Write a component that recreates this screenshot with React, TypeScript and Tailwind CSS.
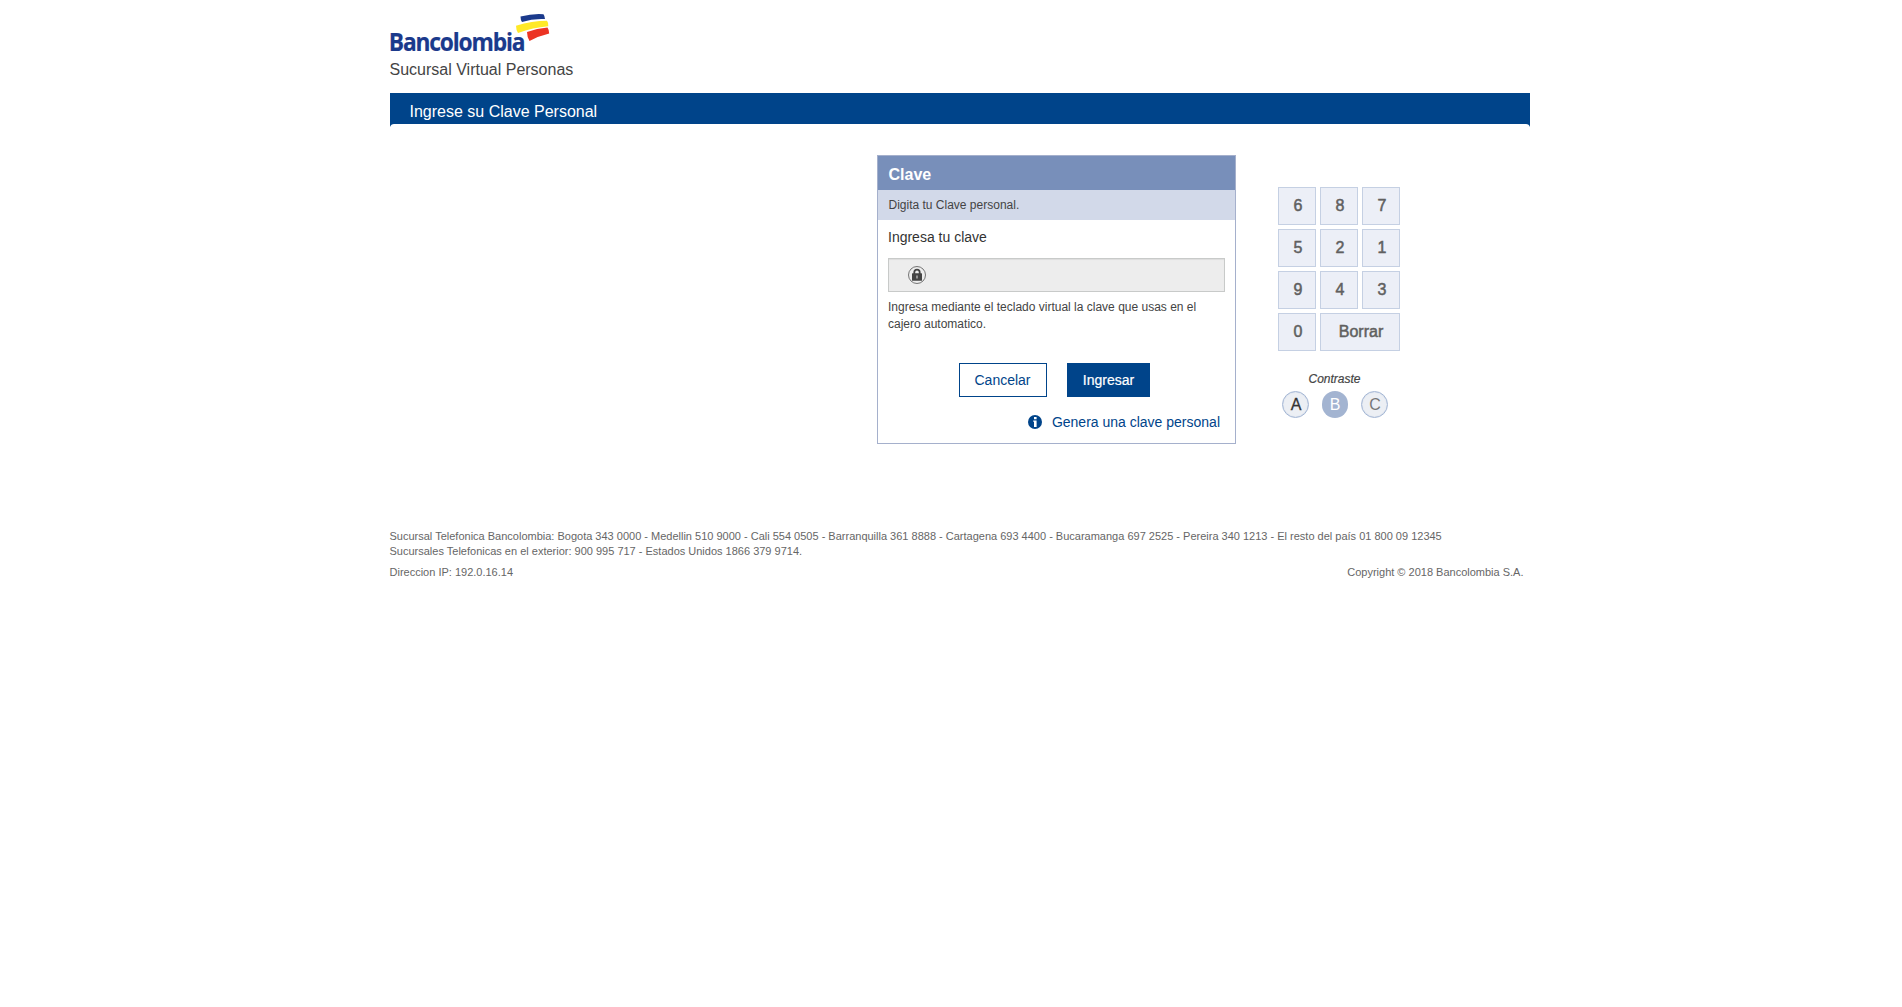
const keys = ['6', '8', '7', '5', '2', '1', '9', '4', '3', '0'];

function Logo() {
  return (
    <svg className="mt-3 block overflow-visible" width="160" height="42" viewBox="0 0 160 42" role="img" aria-label="Bancolombia">
      <text
        transform="translate(-1.2 39) scale(0.93 1)"
        fontFamily='"Open Sans", sans-serif'
        fontWeight="700"
        fontSize="24.500"
        fill="#1b3a8c"
        stroke="#1b3a8c"
        strokeWidth="0.2"
        textLength="147"
        lengthAdjust="spacing"
      >
        Bancolombia
      </text>
      <path d="M130.500 4.500 Q143 1.300 153.500 2.200 Q154.800 4 155 7 Q143 6.300 132 10 Q130.500 8 130.500 4.500Z" fill="#1b3a8c" />
      <path d="M126 13.800 Q142 8.700 157 8.700 Q158.700 11 158.300 14.200 Q143 15.500 128 21 Q126 18 126 13.800Z" fill="#ffe927" />
      <path d="M137 20 Q147 16.200 157.500 15.500 Q159.200 18 159.200 21.600 Q149 24 139.500 29 Q137 25 137 20Z" fill="#ec3424" />
    </svg>
  );
}

function LockIcon() {
  return (
    <svg width="18" height="18" viewBox="0 0 18 18">
      <circle cx="9" cy="9" r="8.500" fill="none" stroke="#666" strokeWidth="0.9" />
      <path d="M6.300 8V6.300a2.700 2.700 0 0 1 5.400 0V8" fill="none" stroke="#444" strokeWidth="1.800" />
      <rect x="4" y="7.200" width="10" height="7.600" rx="0.500" fill="#444" />
      <path d="M8.400 9.600h1.200v2.800H8.400z" fill="#ccc" />
    </svg>
  );
}

function InfoIcon() {
  return (
    <svg width="14" height="14" viewBox="0 0 14 14">
      <circle cx="7" cy="7" r="7" fill="#00448a" />
      <path d="M6 2h2.600v2.200H6zM5.200 5.400H8.600V12H6V6.700h-.8z" fill="#fff" />
    </svg>
  );
}

export default function App() {
  return (
    <div className="ml-[389.5px] w-[1140px] font-['Liberation_Sans',Arial,sans-serif]">
      <header className="flow-root">
        <Logo />
        <h1 className="mt-1 h-6 text-base leading-6 text-[#444]">Sucursal Virtual Personas</h1>
      </header>

      <div className="mt-[11px] h-[31px] bg-[#00448a] pl-5 text-base leading-[37px] text-white">Ingrese su Clave Personal</div>
      <div className="flex h-[3px] justify-between">
        <svg width="4" height="3" viewBox="0 0 4 3"><path d="M0 0H4Q1 0 0 3Z" fill="#00448a" /></svg>
        <svg width="4" height="3" viewBox="0 0 4 3"><path d="M4 0H0Q3 0 4 3Z" fill="#00448a" /></svg>
      </div>

      <main className="ml-[487.5px] mt-7 flex items-start">
        <section className="h-[289px] w-[359px] border border-[#a5b0cc]">
          <h2 className="h-[34px] bg-[#788fba] pl-[10.5px] text-base font-bold leading-[38px] text-white">Clave</h2>
          <p className="h-[30px] bg-[#d2d9e9] pl-[10.5px] text-xs leading-[30px] text-[#444]">Digita tu Clave personal.</p>
          <div className="px-2.5">
            <label className="block h-[38px] text-sm leading-[34px] text-[#333]">Ingresa tu clave</label>
            <div className="flex h-[34px] w-[337px] items-center border border-[#c8cac9] bg-[#ededed] pl-[19px] shadow-[inset_0_1px_1px_rgba(0,0,0,0.07)]">
              <LockIcon />
            </div>
            <p className="mt-[7px] w-[320px] text-xs leading-[17px] text-[#444]">
              Ingresa mediante el teclado virtual la clave que usas en el cajero automatico.
            </p>
          </div>
          <div className="ml-[81px] mt-[30px] flex gap-5 text-sm">
            <button className="h-[34px] w-[88px] border border-[#00448a] bg-white pr-px text-[#00448a]">Cancelar</button>
            <button className="h-[34px] w-[83px] bg-[#00448a] text-white [-webkit-text-stroke:0.2px_white]">Ingresar</button>
          </div>
          <a className="mr-[15px] mt-[15px] flex items-center justify-end gap-2.5 text-sm leading-5 text-[#00448a]">
            <InfoIcon />
            Genera una clave personal
          </a>
        </section>

        <aside className="ml-[42px] mt-8 w-[122px]">
          <div className="grid grid-cols-3 gap-1 text-base text-[#606060] [-webkit-text-stroke:0.5px_#606060]">
            {keys.map((k) => (
              <button key={k} className="h-[38px] w-[38px] border border-[#c5d0e3] bg-[#eceff7] pl-0.5">
                {k}
              </button>
            ))}
            <button className="col-span-2 h-[38px] border border-[#c5d0e3] bg-[#eceff7] pl-0.5">Borrar</button>
          </div>
          <p className="ml-[30.5px] mt-[19px] text-xs italic leading-[18px] text-[#444] [-webkit-text-stroke:0.2px_#444]">Contraste</p>
          <div className="ml-1 mt-[3px] flex gap-[13px] text-base">
            <span className="flex h-[27px] w-[27px] items-center justify-center rounded-full border border-[#a5b7d5] bg-[#eceff4] pl-px text-[#333] shadow-[inset_0_0_1px_#a5b7d5] [-webkit-text-stroke:0.3px_#333]">A</span>
            <span className="flex h-[27px] w-[26px] items-center justify-center rounded-full bg-[#a3b4d1] text-white">B</span>
            <span className="flex h-[27px] w-[27px] items-center justify-center rounded-full border border-[#a5b7d5] bg-[#eceff4] pl-px text-[#777] shadow-[inset_0_0_1px_#a5b7d5]">C</span>
          </div>
        </aside>
      </main>

      <footer className="mt-[85px] text-[11px] leading-[15px] text-[#666]">
        <p>
          Sucursal Telefonica Bancolombia: Bogota 343 0000 - Medellin 510 9000 - Cali 554 0505 - Barranquilla 361 8888 - Cartagena 693 4400 - Bucaramanga 697 2525 - Pereira 340 1213 - El resto del país 01 800 09 12345
        </p>
        <p>Sucursales Telefonicas en el exterior: 900 995 717 - Estados Unidos 1866 379 9714.</p>
        <div className="mt-1.5 flex justify-between pr-[6px]">
          <span>Direccion IP: 192.0.16.14</span>
          <span>Copyright © 2018 Bancolombia S.A.</span>
        </div>
      </footer>
    </div>
  );
}
